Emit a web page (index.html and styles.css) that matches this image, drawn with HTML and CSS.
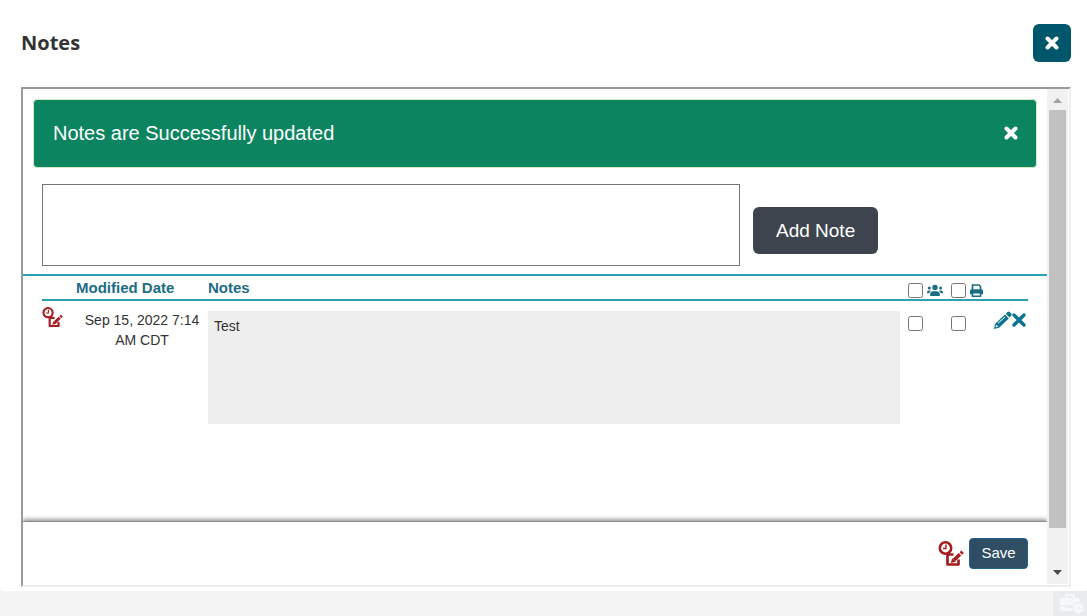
FILE: index.html
```html
<!DOCTYPE html>
<html lang="en">
<head>
    <meta charset="UTF-8">
    <meta name="viewport" content="width=device-width, initial-scale=1.0">
    <title>Notes</title>
    <link rel="stylesheet" href="styles.css">
</head>
<body>
    <!-- shared icons -->
    <svg class="icon-defs" width="0" height="0" aria-hidden="true">
        <symbol id="icon-times" viewBox="0 0 14 14">
            <path d="M2.5 2.5L11.5 11.5M11.5 2.5L2.5 11.5" fill="none" stroke="currentColor" stroke-width="4" stroke-linecap="round"/>
        </symbol>
        <symbol id="icon-history" viewBox="0 0 26 26">
            <g fill="none" stroke="#a61c20" stroke-linejoin="round">
                <circle cx="7.5" cy="7" r="5.7" stroke-width="2.6"/>
                <path d="M8 3.5V7.5H5" stroke-width="1.4"/>
                <path d="M9.5 13V23.5H20.5V18.5M10 13.5H15.5" stroke-width="2.7"/>
                <path d="M16 19L22 13.3M22.8 12.5L24.6 10.8" stroke-width="3.6"/>
            </g>
            <path d="M12.8 22L14.2 17.3L17.8 20.8Z" fill="#a61c20"/>
        </symbol>
    </svg>

    <main class="dialog">
        <header class="dialog-header">
            <h1>Notes</h1>
            <button type="button" class="dialog-close" aria-label="Close">
                <svg width="14" height="14"><use href="#icon-times"/></svg>
            </button>
        </header>

        <div class="frame">
            <form class="panel">
                <div class="alert" role="alert">
                    <span>Notes are Successfully updated</span>
                    <button type="button" class="alert-close" aria-label="Dismiss">
                        <svg width="14" height="14"><use href="#icon-times"/></svg>
                    </button>
                </div>

                <div class="new-note">
                    <textarea aria-label="New note"></textarea>
                    <button type="button" class="add-note">Add Note</button>
                </div>

                <div class="notes-list">
                    <table>
                        <colgroup>
                            <col class="col-history">
                            <col class="col-date">
                            <col>
                            <col class="col-check">
                            <col class="col-check">
                            <col class="col-actions">
                        </colgroup>
                        <thead>
                            <tr>
                                <th></th>
                                <th>Modified Date</th>
                                <th>Notes</th>
                                <th>
                                    <label class="check">
                                        <input type="checkbox" aria-label="Share all">
                                        <svg width="16" height="13" viewBox="0 0 16 13" fill="currentColor">
                                            <circle cx="8" cy="3.5" r="2.7"/>
                                            <circle cx="2.4" cy="4" r="1.5"/>
                                            <circle cx="13.6" cy="4" r="1.5"/>
                                            <path d="M3.2 12V10C3.2 8.2 4.5 7.2 6.2 7.2H9.8C11.5 7.2 12.8 8.2 12.8 10V12ZM0 9C0 7.3 .8 6.5 2 6.5H3C3.6 6.5 3.8 6.7 4 7C2.9 7.6 2.5 8.2 2.3 9.2H0ZM16 9C16 7.3 15.2 6.5 14 6.5H13C12.4 6.5 12.2 6.7 12 7C13.1 7.6 13.5 8.2 13.7 9.2H16Z"/>
                                        </svg>
                                    </label>
                                </th>
                                <th>
                                    <label class="check">
                                        <input type="checkbox" aria-label="Print all">
                                        <svg width="13" height="13" viewBox="0 0 13 13">
                                            <path d="M2.5 6V1H9L10.5 2.5V6" fill="none" stroke="currentColor" stroke-width="1.7"/>
                                            <path d="M0 7C0 6 .7 5.3 1.7 5.3H11.3C12.3 5.3 13 6 13 7V10.2H0Z" fill="currentColor"/>
                                            <path d="M2.5 8.7H10.5V12.2H2.5Z" fill="#fff" stroke="currentColor" stroke-width="1.6"/>
                                        </svg>
                                    </label>
                                </th>
                                <th></th>
                            </tr>
                        </thead>
                        <tbody>
                            <tr>
                                <td class="history">
                                    <svg width="21" height="21"><use href="#icon-history"/></svg>
                                </td>
                                <td class="date">Sep 15, 2022 7:14 AM CDT</td>
                                <td><div class="note-text">Test</div></td>
                                <td><label class="check"><input type="checkbox" aria-label="Share note"></label></td>
                                <td><label class="check"><input type="checkbox" aria-label="Print note"></label></td>
                                <td class="row-actions">
                                    <div class="actions">
                                        <button type="button" aria-label="Edit">
                                            <svg width="19" height="20" viewBox="0 0 19 20">
                                                <path d="M1 19L2.2 13.8L12 4.6L15.8 8.4L6 17.8ZM12.8 3.8L14.5 2C15.2 1.3 16 1.3 16.7 2L18.2 3.6C18.8 4.3 18.8 5 18.2 5.7L16.5 7.6Z" fill="currentColor"/>
                                                <path d="M3.3 14.8L5.2 16.6L3 17.2L2.7 16.9Z" fill="#fff"/>
                                                <path d="M5 13.300L12 7" stroke="#fff" stroke-width="1"/>
                                            </svg>
                                        </button>
                                        <button type="button" aria-label="Delete">
                                            <svg width="14" height="14" viewBox="0 0 14 14">
                                                <path d="M2 2L12 12M12 2L2 12" fill="none" stroke="currentColor" stroke-width="3.4" stroke-linecap="round"/>
                                            </svg>
                                        </button>
                                    </div>
                                </td>
                            </tr>
                        </tbody>
                    </table>
                </div>

                <footer class="panel-footer">
                    <svg width="26" height="26"><use href="#icon-history"/></svg>
                    <button type="submit" class="save">Save</button>
                </footer>
            </form>

            <div class="scrollbar" aria-hidden="true">
                <svg width="9" height="5" viewBox="0 0 9 5"><path d="M0 5L4.5 0L9 5Z" fill="#a0a0a0"/></svg>
                <div class="track"><div class="thumb"></div></div>
                <svg width="9" height="5" viewBox="0 0 9 5"><path d="M0 0L4.5 5L9 0Z" fill="#4a4a4a"/></svg>
            </div>
        </div>
    </main>

    <div class="page-strip">
        <div class="case">
            <svg width="24" height="20" viewBox="0 0 24 20">
                <path d="M6 5V2.5C6 1.5 6.5 1 7.5 1H12.5C13.5 1 14 1.5 14 2.5V5" fill="none" stroke="#f7f8f9" stroke-width="2"/>
                <path d="M0 6C0 4.7 .7 4 2 4H18C19.3 4 20 4.7 20 6V8C16 8 14 9 13 11H0ZM0 12.5H7V14H12.5C12.5 15.5 13 16.5 13.5 17H2C.7 17 0 16.3 0 15Z" fill="#f7f8f9"/>
                <circle cx="18.5" cy="14" r="5" fill="#f7f8f9"/>
                <path d="M18.5 11V14.5H21" fill="none" stroke="#e8ecef" stroke-width="1"/>
            </svg>
        </div>
    </div>
</body>
</html>
```

FILE: styles.css
```css
* {
    box-sizing: border-box;
}
body {
    display: flex;
    flex-direction: column;
    min-height: 100vh;
    margin: 0;
    background-color: #f4f4f4;
    color: #333;
    font-family: "Liberation Sans", Arial, sans-serif;
    font-size: 14px;
    line-height: 20px;
}
button {
    padding: 0;
    border: 0;
    background: none;
    color: inherit;
    font-family: inherit;
    cursor: pointer;
}
svg {
    display: block;
    flex: none;
}
.icon-defs {
    position: absolute;
}

.dialog {
    display: flex;
    flex: 1;
    flex-direction: column;
    padding: 24px 16px 4px 21px;
    border-radius: 0 0 4px 4px;
    background-color: #fff;
}
.dialog-header {
    display: flex;
    justify-content: space-between;
    align-items: center;
    margin-bottom: 25px;
}
.dialog-header h1 {
    margin: 0;
    font-family: "Open Sans", sans-serif;
    font-size: 20px;
    font-weight: 700;
}
.dialog-close {
    display: flex;
    align-items: center;
    justify-content: center;
    width: 38px;
    height: 38px;
    border-radius: 6px;
    background-color: #00566b;
    color: #fff;
}

.frame {
    display: flex;
    flex: 1;
    padding-right: 1px;
    border: 2px solid #9a9a9a;
    border-right-color: #eee;
    border-bottom-color: #eee;
}
.panel {
    display: flex;
    flex: 1;
    flex-direction: column;
}
.alert {
    display: flex;
    align-items: center;
    justify-content: space-between;
    height: 69px;
    margin: 10px 10px 16px;
    padding: 0 18px 2px 19px;
    border: 1px solid #d6e9c6;
    border-radius: 4px;
    background-color: #0c8460;
    color: #fff;
    font-size: 20px;
}

.new-note {
    display: flex;
    align-items: flex-end;
    gap: 13px;
    padding: 0 19px 8px;
}
.new-note textarea {
    width: 698px;
    height: 82px;
    border: 1px solid #767676;
    resize: none;
}
.add-note {
    height: 47px;
    margin-bottom: 12px;
    padding: 0 23px;
    border-radius: 6px;
    background-color: #3d444d;
    color: #fff;
    font-size: 19px;
}

.notes-list {
    flex: 1;
    padding: 0 19px;
    border-top: 2px solid #2ca0b8;
}
table {
    width: 100%;
    table-layout: fixed;
    border-collapse: collapse;
}
.col-history {
    width: 34px;
}
.col-date {
    width: 132px;
}
.col-check {
    width: 43px;
}
.col-actions {
    width: 42px;
}
th {
    height: 24px;
    padding: 0;
    border-bottom: 2px solid #2ca0b8;
    color: #1b6d85;
    font-size: 15px;
    text-align: left;
}
td {
    padding: 10px 0 0;
    vertical-align: top;
}
.check {
    display: flex;
    align-items: center;
    gap: 4px;
    padding-left: 8px;
}
th .check {
    padding-top: 5px;
}
td .check {
    padding-top: 5px;
}
.check input {
    flex: none;
    width: 15px;
    height: 15px;
    margin: 0;
}
td.history {
    padding-top: 6px;
}
td.date {
    padding-top: 9px;
    text-align: center;
}
.note-text {
    height: 113px;
    padding: 5px 6px;
    background-color: #eee;
}
td.row-actions {
    padding-top: 9px;
}
.actions {
    display: flex;
    align-items: center;
    padding-left: 7px;
    color: #0a7490;
}

.panel-footer {
    display: flex;
    align-items: center;
    justify-content: flex-end;
    gap: 5px;
    height: 64px;
    padding: 0 19px;
    border-top: 1px solid #8c8c8c;
    box-shadow: 0 -2px 4px rgba(0, 0, 0, 0.4);
    clip-path: inset(-6px 0 0 0);
}
.save {
    min-width: 59px;
    height: 31px;
    padding: 0 11px 2px;
    border: 1px solid #1f6391;
    border-radius: 4px;
    background-color: #2f4d63;
    color: #fff;
    font-size: 15px;
}

.scrollbar {
    display: flex;
    flex-direction: column;
    align-items: center;
    width: 21px;
    margin-bottom: 1px;
    padding: 9px 2px;
    background-color: #f1f1f1;
}
.track {
    flex: 1;
    align-self: stretch;
    padding: 7px 0;
}
.thumb {
    height: 92%;
    min-height: 418px;
    background-color: #c1c1c1;
}

.page-strip {
    display: flex;
    justify-content: flex-end;
    height: 25px;
}
.case {
    width: 34px;
    padding: 3px 0 0 7px;
    background-color: #e8ecef;
}
```
